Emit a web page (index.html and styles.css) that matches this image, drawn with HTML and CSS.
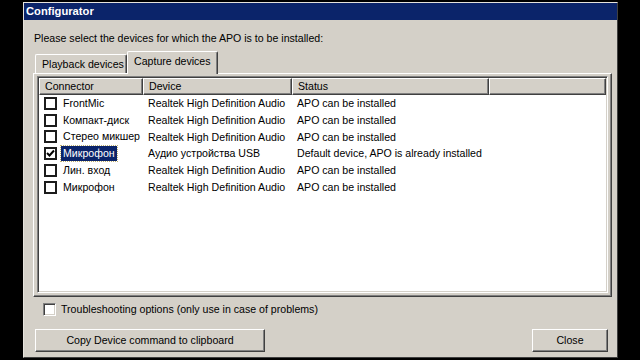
FILE: index.html
```html
<!DOCTYPE html>
<html>
<head>
<meta charset="utf-8">
<link rel="stylesheet" href="styles.css">
</head>
<body>
<div class="window">
  <div class="titlebar">Configurator</div>
  <div class="content">
    <div class="prompt">Please select the devices for which the APO is to be installed:</div>
    <div class="tabs">
      <div class="tab">Playback devices</div>
      <div class="tab active">Capture devices</div>
    </div>
    <div class="panel">
      <div class="listview">
        <div class="header">
          <div class="hcell c1">Connector</div>
          <div class="hcell c2">Device</div>
          <div class="hcell c3">Status</div>
          <div class="hcell c4"></div>
        </div>
        <div class="row">
          <div class="cell c1"><span class="lcheck"></span><span class="label">FrontMic</span></div>
          <div class="cell c2">Realtek High Definition Audio</div>
          <div class="cell c3">APO can be installed</div>
        </div>
        <div class="row">
          <div class="cell c1"><span class="lcheck"></span><span class="label">Компакт-диск</span></div>
          <div class="cell c2">Realtek High Definition Audio</div>
          <div class="cell c3">APO can be installed</div>
        </div>
        <div class="row">
          <div class="cell c1"><span class="lcheck"></span><span class="label">Стерео микшер</span></div>
          <div class="cell c2">Realtek High Definition Audio</div>
          <div class="cell c3">APO can be installed</div>
        </div>
        <div class="row">
          <div class="cell c1"><span class="lcheck"><svg width="9" height="9" viewBox="0 0 9 9"><path d="M1 4 L3.5 6.5 L8 1.5" fill="none" stroke="#000" stroke-width="2"/></svg></span><span class="label selected">Микрофон</span></div>
          <div class="cell c2">Аудио устройства USB</div>
          <div class="cell c3">Default device, APO is already installed</div>
        </div>
        <div class="row">
          <div class="cell c1"><span class="lcheck"></span><span class="label">Лин. вход</span></div>
          <div class="cell c2">Realtek High Definition Audio</div>
          <div class="cell c3">APO can be installed</div>
        </div>
        <div class="row">
          <div class="cell c1"><span class="lcheck"></span><span class="label">Микрофон</span></div>
          <div class="cell c2">Realtek High Definition Audio</div>
          <div class="cell c3">APO can be installed</div>
        </div>
      </div>
    </div>
    <div class="trouble">
      <span class="check3d"></span>
      <span>Troubleshooting options (only use in case of problems)</span>
    </div>
    <div class="buttons">
      <div class="btn copy">Copy Device command to clipboard</div>
      <div class="btn close">Close</div>
    </div>
  </div>
</div>
</body>
</html>
```
FILE: styles.css
```css
* { box-sizing: border-box; }
html, body {
  margin: 0;
  padding: 0;
  background: #000;
  width: 640px;
  height: 360px;
  overflow: hidden;
}
body {
  font-family: "Liberation Sans", Arial, sans-serif;
  font-size: 10.6px;
  color: #000;
  white-space: nowrap;
}
.window {
  margin: 2px 0 0 23px;
  width: 595px;
  height: 356px;
  background: #d4d0c8;
  border-top: 1px solid #e6e3dc;
  border-left: 1px solid #e6e3dc;
  border-right: 1px solid #404040;
  border-bottom: 1px solid #404040;
  display: flex;
  flex-direction: column;
}
.titlebar {
  height: 17px;
  background: #0b246a;
  color: #fff;
  font-weight: bold;
  font-size: 11.2px;
  line-height: 17px;
  padding-left: 2px;
}
.content {
  flex: 1;
  display: flex;
  flex-direction: column;
  padding: 0 5px 0 9px;
}
.prompt {
  margin-top: 12px;
  margin-left: 1px;
  line-height: 13px;
  height: 13px;
}
.tabs {
  margin-top: 6px;
  display: flex;
  align-items: flex-end;
  height: 22px;
  padding-left: 2px;
  position: relative;
  z-index: 1;
}
.tab {
  height: 19px;
  line-height: 18px;
  padding: 0 0 0 6px;
  background: #d4d0c8;
  border-top: 1px solid #fff;
  border-left: 1px solid #fff;
  border-right: 1px solid #404040;
  box-shadow: inset -1px 0 0 #808080;
  border-radius: 2px 2px 0 0;
  width: 92px;
}
.tab.active {
  height: 23px;
  line-height: 19px;
  margin-bottom: -1px;
  width: 91px;
  padding-bottom: 3px;
}
.panel {
  height: 224px;
  border-top: 1px solid #fff;
  border-left: 1px solid #fff;
  border-right: 1px solid #404040;
  border-bottom: 1px solid #404040;
  box-shadow: inset -1px -1px 0 #808080;
  padding: 2px 3px 3px 3px;
}
.listview {
  height: 217px;
  background: #fff;
  border-top: 1px solid #808080;
  border-left: 1px solid #808080;
  border-right: 1px solid #fff;
  border-bottom: 1px solid #fff;
  box-shadow: inset 1px 1px 0 #404040, inset -1px -1px 0 #d4d0c8;
  padding: 1px;
}
.header {
  display: flex;
  height: 17px;
}
.hcell {
  background: #d4d0c8;
  border-top: 1px solid #fff;
  border-left: 1px solid #fff;
  border-right: 1px solid #404040;
  border-bottom: 1px solid #404040;
  box-shadow: inset -1px -1px 0 #808080;
  line-height: 14px;
  padding-left: 5px;
}
.c1 { width: 104px; }
.c2 { width: 149px; }
.c3 { width: 197px; }
.c4 { flex: 1; }
.row {
  display: flex;
  height: 16.8px;
  line-height: 16px;
}
.cell {
  padding-left: 5px;
}
.row .c1 {
  display: flex;
  align-items: center;
  padding-left: 5px;
}
.lcheck {
  width: 13px;
  height: 13px;
  border: 2px solid #1c1c1c;
  background: #fff;
  display: flex;
  align-items: center;
  justify-content: center;
  margin-right: 4px;
  flex: none;
}
.label {
  padding: 0 2px;
  line-height: 15px;
}
.selected {
  background: #0b246a;
  color: #fff;
  outline: 1px dotted #c0b070;
}
.trouble {
  margin-top: 5px;
  display: flex;
  align-items: center;
  height: 14px;
  padding-left: 10px;
}
.check3d {
  width: 13px;
  height: 13px;
  background: #fff;
  border-top: 1px solid #808080;
  border-left: 1px solid #808080;
  border-right: 1px solid #fff;
  border-bottom: 1px solid #fff;
  box-shadow: inset 1px 1px 0 #404040, inset -1px -1px 0 #d4d0c8;
  margin-right: 5px;
}
.buttons {
  margin-top: 13px;
  display: flex;
  justify-content: space-between;
  padding-left: 2px;
  padding-right: 4px;
}
.btn {
  height: 23px;
  line-height: 21px;
  text-align: center;
  background: #d4d0c8;
  border-top: 1px solid #fff;
  border-left: 1px solid #fff;
  border-right: 1px solid #404040;
  border-bottom: 1px solid #404040;
  box-shadow: inset -1px -1px 0 #808080;
}
.btn.copy { width: 230px; }
.btn.close { width: 76px; }
```
